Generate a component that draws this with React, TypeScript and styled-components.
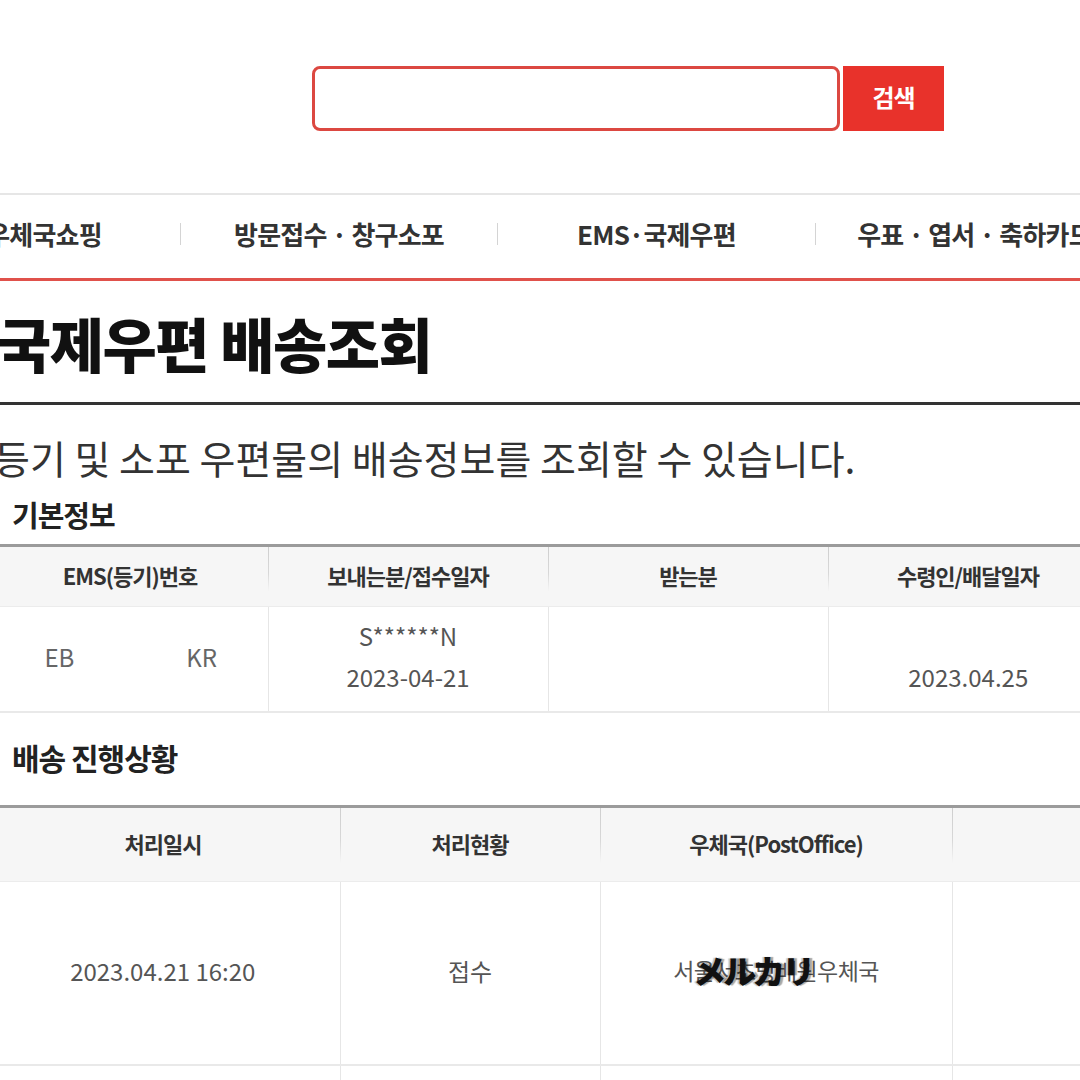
import styled, { createGlobalStyle } from "styled-components";

const GlobalStyle = createGlobalStyle`
  html, body {
    margin: 0;
    padding: 0;
    background: #fff;
  }
  body {
    width: 1080px;
    height: 1080px;
    overflow: hidden;
    font-family: "Noto Sans CJK KR", "Noto Sans", sans-serif;
    color: #333;
  }
`;

const navItems = [
  { label: "우체국쇼핑", width: 272 },
  { label: "방문접수 · 창구소포", width: 316 },
  { label: "EMS·국제우편", width: 317 },
  { label: "우표 · 엽서 · 축하카드", width: 317 },
];

const basicCols = [276, 280, 280, 280];
const trackCols = [354, 260, 352, 300];
const sum = (cols: number[]) => cols.reduce((a, b) => a + b, 0);

const App = () => {
  return (
    <Page>
      <GlobalStyle />
      <SearchBar onSubmit={(e) => e.preventDefault()}>
        <SearchInput type="text" aria-label="검색어" />
        <SearchButton type="submit">검색</SearchButton>
      </SearchBar>

      <Nav>
        <NavList>
          {navItems.map((item, i) => (
            <NavEntry key={item.label}>
              {i > 0 && <NavDivider />}
              <NavItem $w={item.width}>{item.label}</NavItem>
            </NavEntry>
          ))}
        </NavList>
      </Nav>

      <Title>국제우편 배송조회</Title>
      <Description>등기 및 소포 우편물의 배송정보를 조회할 수 있습니다.</Description>

      <SectionTitle $size={29} $gap={12}>
        기본정보
      </SectionTitle>
      <InfoTable $offset={-8} $w={sum(basicCols)}>
        <colgroup>
          {basicCols.map((w, i) => (
            <Col key={i} $w={w} />
          ))}
        </colgroup>
        <thead>
          <tr>
            <Th $h={56}>EMS(등기)번호</Th>
            <Th $h={56}>보내는분/접수일자</Th>
            <Th $h={56}>받는분</Th>
            <Th $h={56}>수령인/배달일자</Th>
          </tr>
        </thead>
        <tbody>
          <tr>
            <Td $h={98}>
              <TrackingNo>
                <span>EB</span>
                <span>KR</span>
              </TrackingNo>
            </Td>
            <Td $h={98}>
              S******N
              <br />
              2023-04-21
            </Td>
            <Td $h={98} />
            <Td $h={98}>
              <br />
              2023.04.25
            </Td>
          </tr>
        </tbody>
      </InfoTable>

      <SectionTitle $size={30} $gap={23}>
        배송 진행상황
      </SectionTitle>
      <InfoTable $offset={-14} $gap={27} $w={sum(trackCols)}>
        <colgroup>
          {trackCols.map((w, i) => (
            <Col key={i} $w={w} />
          ))}
        </colgroup>
        <thead>
          <tr>
            <Th $h={70}>처리일시</Th>
            <Th $h={70}>처리현황</Th>
            <Th $h={70}>우체국(PostOffice)</Th>
            <Th $h={70} />
          </tr>
        </thead>
        <tbody>
          <tr>
            <Td $h={176}>2023.04.21 16:20</Td>
            <Td $h={176}>접수</Td>
            <Td $h={176}>
              <OfficeName>
                서울서초방배원우체국
                <Watermark>メルカリ</Watermark>
              </OfficeName>
            </Td>
            <Td $h={176} />
          </tr>
          <tr>
            <Td $h={80} />
            <Td $h={80} />
            <Td $h={80} />
            <Td $h={80} />
          </tr>
        </tbody>
      </InfoTable>
    </Page>
  );
};

export default App;

const Page = styled.div`
  width: 1080px;
  height: 1080px;
  overflow: hidden;
`;

const SearchBar = styled.form`
  display: flex;
  gap: 3px;
  margin: 0;
  padding: 66px 0 0 312px;
`;

const SearchInput = styled.input`
  box-sizing: border-box;
  width: 528px;
  height: 65px;
  border: 3px solid #dc4841;
  border-radius: 8px;
  outline: none;
  background: #fff;
`;

const SearchButton = styled.button`
  width: 101px;
  height: 65px;
  border: none;
  background: #e8322b;
  color: #fff;
  font-family: inherit;
  font-size: 24px;
  font-weight: 700;
  letter-spacing: -1px;
  padding: 0 0 4px;
  cursor: pointer;
`;

const Nav = styled.nav`
  margin-top: 62px;
  height: 77px;
  padding-bottom: 6px;
  border-top: 2px solid #e6e6e6;
  border-bottom: 3px solid #e0514b;
  display: flex;
  align-items: center;
`;

const NavList = styled.div`
  display: flex;
  align-items: center;
  margin-left: -92px;
`;

const NavEntry = styled.div`
  display: flex;
  align-items: center;
`;

const NavDivider = styled.span`
  width: 1px;
  height: 22px;
  background: #d4d4d4;
`;

const NavItem = styled.div<{ $w: number }>`
  flex: 0 0 ${(p) => p.$w}px;
  text-align: center;
  white-space: nowrap;
  font-size: 26px;
  font-weight: 700;
  letter-spacing: -0.8px;
  color: #333;
`;

const Title = styled.h1`
  box-sizing: border-box;
  margin: 0 0 0 -3px;
  height: 124px;
  padding-top: 1px;
  display: flex;
  align-items: center;
  border-bottom: 3px solid #333;
  font-size: 59px;
  font-weight: 900;
  letter-spacing: -1.5px;
  color: #111;
`;

const Description = styled.p`
  margin: 28px 0 0 -6px;
  font-size: 39px;
  line-height: 48px;
  color: #333;
  white-space: nowrap;
`;

const SectionTitle = styled.h2<{ $size: number; $gap: number }>`
  margin: ${(p) => p.$gap}px 0 0 12px;
  font-size: ${(p) => p.$size}px;
  line-height: 42px;
  font-weight: 700;
  letter-spacing: -1px;
  color: #222;
`;

const InfoTable = styled.table<{ $offset: number; $gap?: number; $w: number }>`
  width: ${(p) => p.$w}px;
  margin: ${(p) => p.$gap ?? 9}px 0 0 ${(p) => p.$offset}px;
  border-collapse: collapse;
  table-layout: fixed;
  border-top: 3px solid #9b9b9b;
`;

const Col = styled.col<{ $w: number }>`
  width: ${(p) => p.$w}px;
`;

const Th = styled.th<{ $h: number }>`
  position: relative;
  height: ${(p) => p.$h}px;
  padding: 0 0 3px;
  background: #f6f6f6;
  border-bottom: 1px solid #ececec;
  font-size: 22px;
  font-weight: 700;
  letter-spacing: -1px;
  color: #333;
  text-align: center;
  white-space: nowrap;

  & + &::before {
    content: "";
    position: absolute;
    left: 0;
    top: 0;
    bottom: 0;
    width: 1px;
    background: linear-gradient(#cfcfcf, #d8d8d8 45%, transparent 75%);
  }
`;

const Td = styled.td<{ $h: number }>`
  height: ${(p) => p.$h}px;
  padding: 0 0 6px;
  border-bottom: 2px solid #e9e9e9;
  font-size: 24px;
  line-height: 41px;
  color: #555;
  text-align: center;
  vertical-align: middle;
  white-space: nowrap;

  & + & {
    border-left: 1px solid #e6e6e6;
  }
`;

const TrackingNo = styled.div`
  display: flex;
  justify-content: center;
  gap: 112px;
  padding-left: 2px;
  color: #666;
`;

const OfficeName = styled.span`
  position: relative;
  display: inline-block;
  font-size: 23px;
  letter-spacing: -0.6px;
  color: #555;
`;

const Watermark = styled.span`
  position: absolute;
  left: 20px;
  top: 50%;
  transform: translateY(-52%);
  font-family: "Noto Sans CJK JP", "Noto Sans CJK KR", sans-serif;
  font-size: 33px;
  font-weight: 900;
  letter-spacing: -3px;
  color: #111;
  text-shadow: 3px 0 1px rgba(0, 0, 0, 0.35), -2px 0 1px rgba(0, 0, 0, 0.25);
`;
